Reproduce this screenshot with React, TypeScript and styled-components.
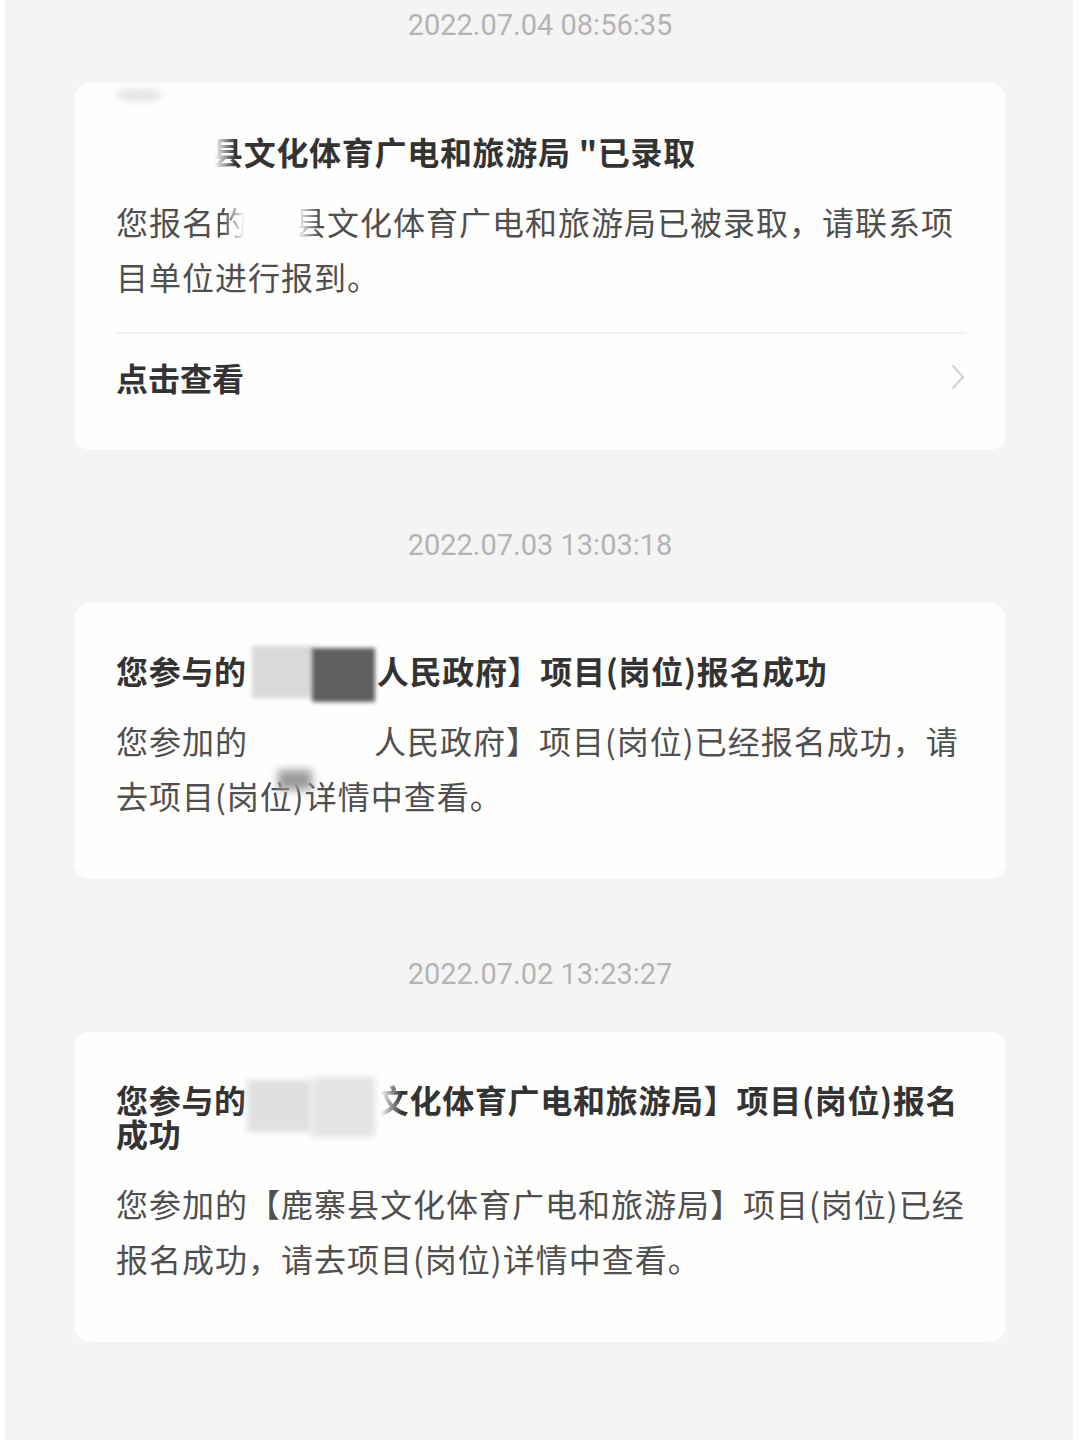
import styled, { createGlobalStyle } from "styled-components";

const GlobalStyle = createGlobalStyle`
  body {
    margin: 0;
    background: #ffffff;
    font-family: "Noto Sans CJK SC", "Noto Sans", sans-serif;
  }
`;

const Page = styled.div`
  padding: 0 7px 0 5px;
`;

const Column = styled.div`
  min-height: 1440px;
  box-sizing: border-box;
  background: #f4f4f5;
  padding: 5px 0 40px 69px;
`;

const Group = styled.section<{ $first?: boolean }>`
  width: 932px;
  margin-top: ${(p) => (p.$first ? "0" : "75px")};
`;

const Stamp = styled.div`
  height: 40px;
  line-height: 40px;
  margin-bottom: 38px;
  text-align: center;
  font-family: Roboto, "Noto Sans", sans-serif;
  font-size: 29px;
  color: #b4b4b4;
`;

const Card = styled.div<{ $top?: number }>`
  position: relative;
  box-sizing: border-box;
  background: #fefefd;
  border-radius: 16px;
  padding: ${(p) => p.$top ?? 50}px 40px 56px 42px;
`;

const Title = styled.div`
  font-size: 32px;
  line-height: 34px;
  font-weight: 700;
  letter-spacing: 0.7px;
  color: #333333;
`;

const Body = styled.div`
  margin-top: 26px;
  font-size: 32px;
  line-height: 55px;
  letter-spacing: 1px;
  color: #4f4f4f;
`;

const Divider = styled.div`
  margin-top: 28px;
  border-top: 2px solid #f1f1f1;
`;

const Footer = styled.div`
  display: flex;
  align-items: center;
  justify-content: space-between;
  padding-top: 26px;
  font-size: 32px;
  line-height: 34px;
  font-weight: 700;
  color: #333333;
`;

/* blank run left by the redaction; height 0 so it never grows the line box */
const Gap = styled.span<{ $w: number }>`
  display: inline-block;
  position: relative;
  width: ${(p) => p.$w}px;
  height: 0;
  vertical-align: baseline;
`;

const Blob = styled.span<{ $x: number; $y: number; $w: number; $h: number; $c: string; $b?: number }>`
  position: absolute;
  left: ${(p) => p.$x}px;
  top: ${(p) => p.$y}px;
  width: ${(p) => p.$w}px;
  height: ${(p) => p.$h}px;
  background: ${(p) => p.$c};
  filter: blur(${(p) => p.$b ?? 3}px);
`;

const TopBlob = styled.span`
  position: absolute;
  left: 42px;
  top: 5px;
  width: 46px;
  height: 14px;
  border-radius: 50%;
  background: #e6e6e6;
  filter: blur(3px);
`;

const Fade = styled.span<{ $dir: "left" | "right" }>`
  -webkit-mask-image: linear-gradient(
    to ${(p) => p.$dir},
    transparent 10%,
    #000 75%
  );
  mask-image: linear-gradient(to ${(p) => p.$dir}, transparent 10%, #000 75%);
`;

function Chevron() {
  return (
    <svg width="16" height="26" viewBox="0 0 16 26" fill="none">
      <path d="M3 2l10 11L3 24" stroke="#cfcfcf" strokeWidth="2" strokeLinecap="round" strokeLinejoin="round" />
    </svg>
  );
}

export default function App() {
  return (
    <Page>
      <GlobalStyle />
      <Column>
        <Group $first>
          <Stamp>2022.07.04 08:56:35</Stamp>
          <Card $top={51}>
            <TopBlob />
            <Title>
              <Gap $w={95} />
              <Fade $dir="right">县</Fade>文化体育广电和旅游局 "已录取
            </Title>
            <Body>
              您报名<Fade $dir="left">的</Fade>
              <Gap $w={46} />
              <Fade $dir="right">县</Fade>文化体育广电和旅游局已被录取，请联系项目单位进行报到。
            </Body>
            <Divider />
            <Footer>
              点击查看
              <Chevron />
            </Footer>
          </Card>
        </Group>

        <Group>
          <Stamp>2022.07.03 13:03:18</Stamp>
          <Card>
            <Title>
              您参与的
              <Gap $w={130}>
                <Blob $x={5} $y={-38} $w={62} $h={52} $c="#d9d9d9" $b={2} />
                <Blob $x={65} $y={-36} $w={63} $h={54} $c="#5f5f5f" $b={2} />
              </Gap>
              人民政府】项目(岗位)报名成功
            </Title>
            <Body>
              您参加的
              <Gap $w={126}>
                <Blob $x={30} $y={16} $w={34} $h={20} $c="#9a9a9a" $b={4} />
              </Gap>
              人民政府】项目(岗位)已经报名成功，请去项目(岗位)详情中查看。
            </Body>
          </Card>
        </Group>

        <Group>
          <Stamp>2022.07.02 13:23:27</Stamp>
          <Card>
            <Title>
              您参与的
              <Gap $w={130}>
                <Blob $x={0} $y={-33} $w={65} $h={52} $c="#e0e0e0" $b={3} />
                <Blob $x={65} $y={-36} $w={63} $h={60} $c="#e4e4e4" $b={3} />
              </Gap>
              <Fade $dir="right">文</Fade>化体育广电和旅游局】项目(岗位)报名成功
            </Title>
            <Body>
              您参加的【鹿寨县文化体育广电和旅游局】项目(岗位)已经报名成功，请去项目(岗位)详情中查看。
            </Body>
          </Card>
        </Group>
      </Column>
    </Page>
  );
}
